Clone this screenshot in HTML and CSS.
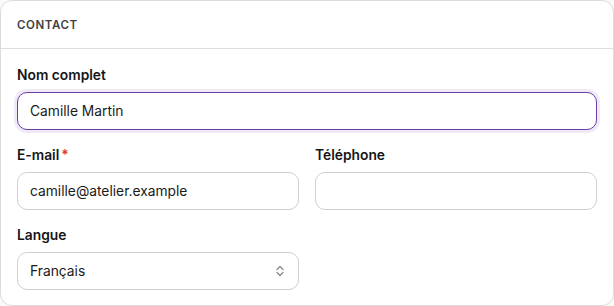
FILE: index.html
```html
<!DOCTYPE html>
<html>

<head>
    <meta http-equiv="Content-Type" content="text/html;charset=UTF-8" />
    <meta name="viewport" content="width=device-width,initial-scale=1">
    <title>Contact</title>
    <link rel="stylesheet" href="styles.css">
</head>

<body>
    <section class="card">
        <header class="card_head">Contact</header>
        <div class="card_body">
            <div class="field">
                <label class="label" for="nom">Nom complet</label>
                <input class="input focus" id="nom" type="text" value="Camille Martin">
            </div>
            <div class="row">
                <div class="field">
                    <label class="label" for="mail">E-mail<span class="req">*</span></label>
                    <input class="input" id="mail" type="text" value="camille@atelier.example">
                </div>
                <div class="field">
                    <label class="label" for="tel">Téléphone</label>
                    <input class="input" id="tel" type="text" value="">
                </div>
            </div>
            <div class="row">
                <div class="field">
                    <label class="label" for="langue">Langue</label>
                    <div class="select">
                        <span>Français</span>
                        <svg class="chevron" width="10" height="12" viewBox="0 0 10 12">
                            <path d="M2 4.5 L5 1.5 L8 4.5" fill="none" stroke="#8a8a8a" stroke-width="1.3" stroke-linecap="round" stroke-linejoin="round"/>
                            <path d="M2 7.5 L5 10.5 L8 7.5" fill="none" stroke="#8a8a8a" stroke-width="1.3" stroke-linecap="round" stroke-linejoin="round"/>
                        </svg>
                    </div>
                </div>
            </div>
        </div>
    </section>
</body>

</html>
```

FILE: styles.css
```css
* {
    margin: 0;
    padding: 0;
    box-sizing: border-box;
}

html {
    font-family: Inter, "Noto Sans", sans-serif;
    background: #fafafa;
    color: #1a1a1a;
}

.card {
    width: 614px;
    background: #fff;
    border: 1px solid #dcdcdc;
    border-radius: 12px;
}

.card_head {
    height: 48px;
    padding: 0 16px;
    display: flex;
    align-items: center;
    border-bottom: 1px solid #dedede;
    font-size: 11.5px;
    font-weight: 600;
    letter-spacing: 0.05em;
    text-transform: uppercase;
    color: #3f3f3f;
}

.card_body {
    padding: 17px 16px 15px;
    display: flex;
    flex-direction: column;
    gap: 16px;
}

.row {
    display: grid;
    grid-template-columns: 1fr 1fr;
    gap: 16px;
}

.field {
    display: flex;
    flex-direction: column;
    gap: 8px;
}

.label {
    font-size: 13.8px;
    line-height: 18px;
    font-weight: 600;
    color: #161616;
}

.req {
    color: #d9373a;
    margin-left: 2px;
}

.input,
.select {
    height: 38px;
    width: 100%;
    padding: 0 12px;
    border: 1px solid #cfcfcf;
    border-radius: 10px;
    background: #fff;
    font-family: Inter, "Noto Sans", sans-serif;
    font-size: 13.8px;
    color: #1a1a1a;
    outline: none;
}

.input.focus {
    border-color: #6a3fa6;
    box-shadow: 0 0 0 3px rgba(124, 77, 200, 0.12);
}

.select {
    display: flex;
    align-items: center;
    justify-content: space-between;
    padding-right: 13px;
}
```
